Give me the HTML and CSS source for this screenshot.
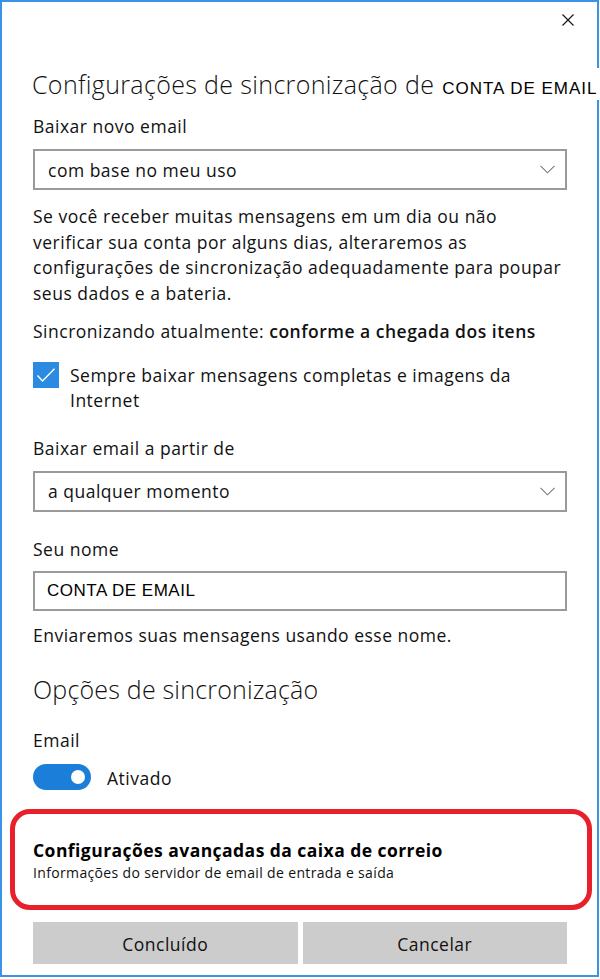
FILE: index.html
```html
<!DOCTYPE html>
<html lang="pt-BR">
<head>
<meta charset="utf-8">
<title>Configurações de sincronização</title>
<link rel="stylesheet" href="styles.css">
</head>
<body>
<div class="window">
  <div class="titlebar">
    <button class="close" aria-label="Fechar">
      <svg width="12" height="12" viewBox="0 0 12 12"><path d="M0.5 0.5 L11.5 11.5 M11.5 0.5 L0.5 11.5" stroke="#1a1a1a" stroke-width="1.2" fill="none"/></svg>
    </button>
  </div>

  <h1 class="title">Configurações de sincronização de <span class="acct">CONTA DE EMAIL</span></h1>

  <div class="label first">Baixar novo email</div>
  <div class="select">
    <span>com base no meu uso</span>
    <svg class="chev" width="15" height="9" viewBox="0 0 15 9"><polyline points="0.5,0.8 7.5,7.8 14.5,0.8" stroke="#7a7a7a" stroke-width="1.1" fill="none"/></svg>
  </div>

  <p class="desc">Se você receber muitas mensagens em um dia ou não<br>verificar sua conta por alguns dias, alteraremos as<br>configurações de sincronização adequadamente para poupar<br>seus dados e a bateria.</p>

  <p class="status">Sincronizando atualmente: <b>conforme a chegada dos itens</b></p>

  <div class="check">
    <span class="box">
      <svg width="26" height="26" viewBox="0 0 26 26"><polyline points="4.5,13.5 9.5,19 21.5,6.8" stroke="#fff" stroke-width="1.5" fill="none"/></svg>
    </span>
    <span class="check-text">Sempre baixar mensagens completas e imagens da Internet</span>
  </div>

  <div class="label from">Baixar email a partir de</div>
  <div class="select">
    <span>a qualquer momento</span>
    <svg class="chev" width="15" height="9" viewBox="0 0 15 9"><polyline points="0.5,0.8 7.5,7.8 14.5,0.8" stroke="#7a7a7a" stroke-width="1.1" fill="none"/></svg>
  </div>

  <div class="label name">Seu nome</div>
  <div class="input"><span class="acct-input">CONTA DE EMAIL</span></div>
  <div class="hint">Enviaremos suas mensagens usando esse nome.</div>

  <h2 class="subtitle">Opções de sincronização</h2>

  <div class="label email">Email</div>
  <div class="toggle-row">
    <span class="toggle"><span class="knob"></span></span>
    <span class="toggle-text">Ativado</span>
  </div>

  <div class="advanced">
    <div class="adv-title">Configurações avançadas da caixa de correio</div>
    <div class="adv-sub">Informações do servidor de email de entrada e saída</div>
  </div>

  <div class="buttons">
    <button class="btn">Concluído</button>
    <button class="btn">Cancelar</button>
  </div>
</div>
</body>
</html>
```

FILE: styles.css
```css
html, body {
  margin: 0;
  padding: 0;
  background: #ffffff;
}

.window {
  width: 599px;
  height: 977px;
  box-sizing: border-box;
  border: 2px solid #3c93e6;
  padding: 0 30px 0 31px;
  background: #ffffff;
  font-family: "Open Sans", "Noto Sans", sans-serif;
  font-size: 17.5px;
  letter-spacing: 0.5px;
  line-height: 22px;
  color: #111111;
}

.titlebar {
  height: 44px;
  display: flex;
  justify-content: flex-end;
  align-items: flex-start;
  margin-right: -7px;
  padding-top: 12px;
  box-sizing: border-box;
}

.close {
  border: 0;
  background: transparent;
  padding: 0;
  width: 12px;
  height: 12px;
  display: block;
}

.close svg {
  display: block;
}

.title {
  margin: 22px 0 0 -1px;
  font-size: 25px;
  font-weight: 300;
  letter-spacing: 0.35px;
  line-height: 32px;
  white-space: nowrap;
  width: max-content;
  padding-right: 4px;
  background: #ffffff;
  color: #111111;
}

.acct {
  font-family: "Liberation Sans", Arial, sans-serif;
  font-size: 17px;
  font-weight: 400;
  letter-spacing: 1px;
  line-height: 20px;
  color: #000000;
  margin-left: 1px;
}

.label {
  line-height: 22px;
}

.label.first { margin-top: 15px; }
.label.from { margin-top: 24px; }
.label.name { margin-top: 26px; }
.label.email { margin-top: 24px; }

.select {
  margin-top: 12px;
  height: 41px;
  box-sizing: border-box;
  border: 2px solid #9a9a9a;
  display: flex;
  align-items: center;
  justify-content: space-between;
  padding: 0 10px 0 13px;
}

.chev {
  display: block;
}

.desc {
  margin: 14px -20px 0 0;
  line-height: 25.5px;
  white-space: nowrap;
}

.status {
  margin: 13px 0 0 0;
  line-height: 25.5px;
  white-space: nowrap;
}

.status b {
  font-weight: 600;
}

.check {
  margin-top: 17px;
  display: flex;
  align-items: flex-start;
  gap: 11px;
}

.box {
  flex: none;
  width: 26px;
  height: 26px;
  background: #2b8ae2;
  display: block;
}

.box svg {
  display: block;
}

.check-text {
  padding-top: 1px;
  line-height: 25px;
}

.input {
  margin-top: 11px;
  height: 40px;
  box-sizing: border-box;
  border: 2px solid #9a9a9a;
  display: flex;
  align-items: center;
  padding: 0 12px;
}

.acct-input {
  font-family: "Liberation Sans", Arial, sans-serif;
  font-size: 17px;
  letter-spacing: 0.5px;
  color: #000000;
}

.hint {
  margin-top: 13px;
}

.subtitle {
  margin: 27px 0 0 0;
  font-size: 25px;
  font-weight: 300;
  letter-spacing: 0.2px;
  line-height: 32px;
  color: #111111;
}

.toggle-row {
  margin-top: 13px;
  height: 26px;
  display: flex;
  align-items: center;
  gap: 16px;
}

.toggle {
  flex: none;
  width: 58px;
  height: 26px;
  border-radius: 13px;
  background: #1b7fd9;
  display: flex;
  align-items: center;
  justify-content: flex-end;
  padding-right: 6px;
  box-sizing: border-box;
}

.knob {
  width: 14px;
  height: 14px;
  border-radius: 50%;
  background: #ffffff;
}

.toggle-text {
  padding-top: 3px;
}

.advanced {
  margin: 19px -25px 0 -23px;
  border: 5px solid #e8202b;
  border-radius: 20px;
  padding: 25px 18px 23px 18px;
}

.adv-title {
  font-weight: 700;
  font-size: 17.5px;
  letter-spacing: 0.45px;
  line-height: 22px;
  color: #000000;
}

.adv-sub {
  margin-top: 3px;
  font-size: 14px;
  letter-spacing: 0.35px;
  line-height: 18px;
  color: #111111;
}

.buttons {
  margin-top: 12px;
  display: grid;
  grid-template-columns: 1fr 1fr;
  gap: 5px;
}

.btn {
  height: 42px;
  border: 0;
  background: #cccccc;
  font-family: "Open Sans", "Noto Sans", sans-serif;
  font-size: 17.5px;
  letter-spacing: 0.5px;
  color: #111111;
  padding: 2px 0 0 0;
}
```
